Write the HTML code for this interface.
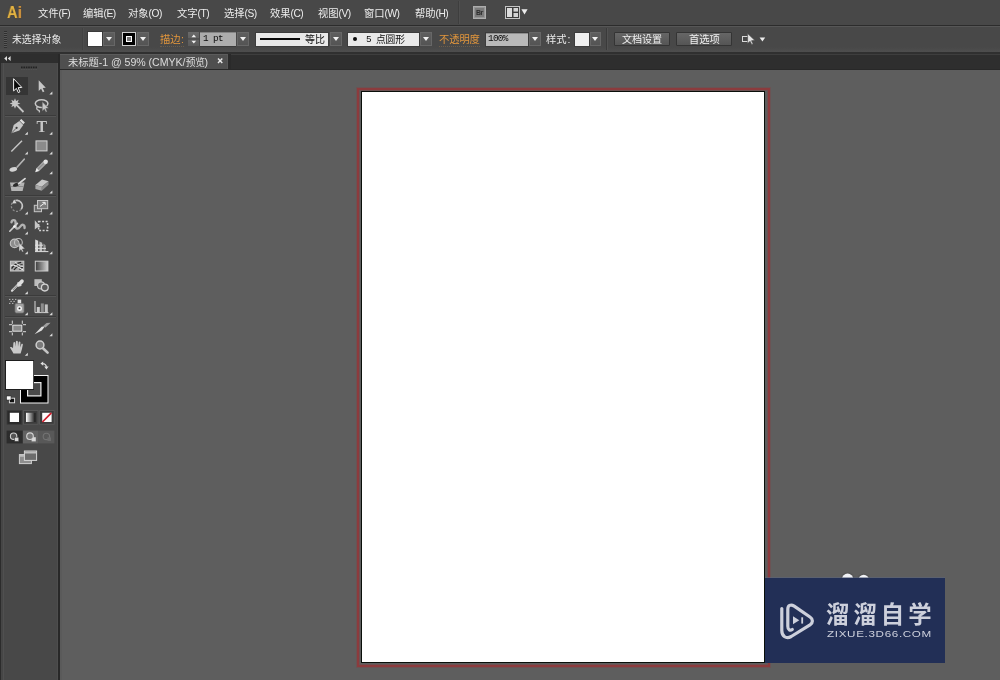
<!DOCTYPE html>
<html lang="zh-CN"><head><meta charset="utf-8"><title>Adobe Illustrator</title>
<style>
html,body{margin:0;padding:0}
body{width:1000px;height:680px;overflow:hidden;position:relative;background:#5e5e5e;
 font-family:"Liberation Sans","Noto Sans CJK SC",sans-serif;font-size:10.5px;color:#e2e2e2}
.a{position:absolute}
.lb{position:absolute;white-space:nowrap;line-height:14px;height:14px;will-change:transform}
.cjt{font-family:"Liberation Sans","Noto Sans CJK SC",sans-serif}
.mono{font-family:"Liberation Mono",monospace}
.dd{position:absolute;width:11.5px;height:14px;box-sizing:border-box;background:linear-gradient(#5e5e5e,#545454);
 border:1px solid #676767}
.dd:after{content:"";position:absolute;left:1.75px;top:3.5px;border-left:3px solid transparent;border-right:3px solid transparent;border-top:4.5px solid #f0f0f0}
.btn{position:absolute;height:14px;box-sizing:border-box;border:1px solid #343434;background:linear-gradient(#666,#555);border-radius:1px}
.fly{fill:#dcdcdc}
</style></head>
<body>
<div class="a" style="left:0px;top:0px;width:1000px;height:25px;background:#484848;"></div>
<div class="a" style="left:0px;top:25px;width:1000px;height:1px;background:#2c2c2c;"></div>
<div class="a" style="left:0px;top:26px;width:1000px;height:1px;background:#565656;"></div>
<div class="a" style="left:0px;top:27px;width:1000px;height:25px;background:linear-gradient(#484848 0,#484848 80%,#4e4e4e 100%);"></div>
<div class="a" style="left:0px;top:52px;width:1000px;height:2px;background:#303030;"></div>
<div class="a" style="left:0px;top:54px;width:1000px;height:1px;background:#3e3e3e;"></div>
<div class="a" style="left:0px;top:55px;width:1000px;height:14px;background:#2e2e2e;"></div>
<div class="a" style="left:60px;top:69px;width:940px;height:1px;background:#282828;"></div>
<div class="a" style="left:60px;top:54px;width:168px;height:15px;background:#4f4f4f;border-top:1px solid #5c5c5c;box-sizing:border-box;border-right:1px solid #585858"></div>
<div class="a" style="left:228px;top:54px;width:3px;height:15px;background:#2a2a2a;"></div>
<div class="a" style="left:60px;top:70px;width:2px;height:610px;background:#5a5a5a;"></div>
<div class="a" style="left:0px;top:54px;width:58px;height:626px;background:#484848;"></div>
<div class="a" style="left:0px;top:54px;width:58px;height:9px;background:#2e2e2e;"></div>
<div class="a" style="left:0px;top:54px;width:1px;height:626px;background:#2c2c2c;"></div>
<div class="a" style="left:1px;top:63px;width:2px;height:617px;background:#464646;"></div>
<div class="a" style="left:3px;top:63px;width:1px;height:617px;background:#505050;"></div>
<div class="a" style="left:57px;top:63px;width:1px;height:617px;background:#4e4e4e;"></div>
<div class="a" style="left:58px;top:54px;width:2px;height:626px;background:#282828;"></div>
<div class="a" style="left:357px;top:88px;width:413px;height:579px;background:transparent;box-sizing:border-box;border:2px solid #8c3b3d;box-shadow:0 0 0 1px rgba(140,59,61,.28),inset 0 0 0 1px rgba(140,59,61,.33)"></div>
<div class="a" style="left:361px;top:91px;width:404px;height:572px;background:#ffffff;box-sizing:border-box;border:1px solid #0a0f0a"></div>
<div class="a" style="left:765px;top:578px;width:180px;height:85px;background:#222f56;"></div>
<div class="a" style="left:7.300px;top:1.800px;height:20px;line-height:20px;font-weight:bold;font-size:16.600px;color:#e4b443;transform:scaleX(.880);transform-origin:0 0;letter-spacing:-.200px;will-change:transform;text-shadow:0 0 1.500px rgba(110,70,0,.700)">A<span style="color:#dc9c42;margin-left:.500px;font-size:17.200px">i</span></div>
<div class="lb" style="left:37.6px;top:6px;color:#ececec;"><span class="cjt" style="font-size:10.3px">文件</span><span style="font-size:10.2px;letter-spacing:-.5px">(F)</span></div>
<div class="lb" style="left:83.1px;top:6px;color:#ececec;"><span class="cjt" style="font-size:10.3px">编辑</span><span style="font-size:10.2px;letter-spacing:-.5px">(E)</span></div>
<div class="lb" style="left:128.1px;top:6px;color:#ececec;"><span class="cjt" style="font-size:10.3px">对象</span><span style="font-size:10.2px;letter-spacing:-.5px">(O)</span></div>
<div class="lb" style="left:176.6px;top:6px;color:#ececec;"><span class="cjt" style="font-size:10.3px">文字</span><span style="font-size:10.2px;letter-spacing:-.5px">(T)</span></div>
<div class="lb" style="left:223.6px;top:6px;color:#ececec;"><span class="cjt" style="font-size:10.3px">选择</span><span style="font-size:10.2px;letter-spacing:-.5px">(S)</span></div>
<div class="lb" style="left:269.6px;top:6px;color:#ececec;"><span class="cjt" style="font-size:10.3px">效果</span><span style="font-size:10.2px;letter-spacing:-.5px">(C)</span></div>
<div class="lb" style="left:317.6px;top:6px;color:#ececec;"><span class="cjt" style="font-size:10.3px">视图</span><span style="font-size:10.2px;letter-spacing:-.5px">(V)</span></div>
<div class="lb" style="left:364.1px;top:6px;color:#ececec;"><span class="cjt" style="font-size:10.3px">窗口</span><span style="font-size:10.2px;letter-spacing:-.5px">(W)</span></div>
<div class="lb" style="left:414.6px;top:6px;color:#ececec;"><span class="cjt" style="font-size:10.3px">帮助</span><span style="font-size:10.2px;letter-spacing:-.5px">(H)</span></div>
<div class="a" style="left:458px;top:1px;width:1px;height:23px;background:#3e3e3e;"></div>
<div class="a" style="left:459px;top:1px;width:1px;height:23px;background:#4f4f4f;"></div>
<div class="a" style="left:473px;top:6px;width:13px;height:13px;box-sizing:border-box;border:1px solid #adadad;background:#7a7a7a;box-shadow:inset 0 0 0 1px #959595"></div>
<div class="a" style="left:475.5px;top:7.5px;font-size:8px;line-height:10px;font-weight:bold;color:#2c2c2c;letter-spacing:-.5px;transform:scaleX(.85);transform-origin:0 0;will-change:transform">Br</div>
<svg class="a" style="left:504px;top:5px" width="26" height="16" viewBox="504 5 26 16"><rect x="505.5" y="6.5" width="14" height="12" fill="#3c3c3c" stroke="#c4c4c4"/><rect x="507" y="8" width="5" height="9" fill="#dcdcdc"/><rect x="513.5" y="8" width="4.5" height="3.6" fill="#d4d4d4"/><rect x="513.5" y="13" width="4.5" height="4" fill="#d4d4d4"/><path d="M521.400 9.300h6.200l-3.100 5.100z" fill="#ececec"/></svg>
<div class="a" style="left:4px;top:31px;width:3px;height:17px;background:repeating-linear-gradient(#2f2f2f 0,#2f2f2f 1px,#585858 1px,#585858 2px)"></div>
<div class="lb" style="left:11.6px;top:31.6px;color:#ececec;"><span class="cjt" style="font-size:9.85px">未选择对象</span></div>
<div class="a" style="left:82px;top:28px;width:1px;height:22px;background:#424242;"></div>
<div class="a" style="left:83px;top:28px;width:1px;height:22px;background:#4d4d4d;"></div>
<div class="a" style="left:88px;top:32px;width:14px;height:14px;background:#ffffff;box-shadow:0 0 0 1px #3a3a3a"></div>
<div class="dd" style="left:103px;top:32px"></div>
<div class="a" style="left:121.5px;top:32px;width:14px;height:14px;box-sizing:border-box;border:1px solid #cfcfcf;background:#000"></div>
<div class="a" style="left:125.5px;top:36px;width:6px;height:6px;box-sizing:border-box;border:1.5px solid #fff;background:#777"></div>
<div class="dd" style="left:137px;top:32px"></div>
<div class="lb" style="left:160px;top:31.8px;color:#e2963c;border-bottom:1px dotted rgba(150,120,80,.45);height:14px"><span class="cjt" style="font-size:10.3px">描边</span><span style="margin-left:.5px">:</span></div>
<div class="a" style="left:187.500px;top:32px;width:11.500px;height:14px;background:linear-gradient(#6a6a6a,#606060 46%,#3c3c3c 47%,#3c3c3c 53%,#626262 54%,#5a5a5a)"></div>
<svg class="a" style="left:187.500px;top:32px" width="12" height="14" viewBox="0 0 12 14"><path d="M5.800 2.400l2.300 2.800H3.500z M5.800 11.600l2.300-2.800H3.500z" fill="#f2f2f2"/></svg>
<div class="a" style="left:200px;top:32px;width:36px;height:14px;background:#adadad;box-shadow:inset 0 1px 0 #858585,0 1px 0 #3a3a3a"></div>
<div class="lb" style="left:202.5px;top:30.1px;"><span class="mono" style="font-size:9.400px;letter-spacing:-.640px;color:#0c0c0c">1 pt</span></div>
<div class="dd" style="left:237px;top:32px"></div>
<div class="a" style="left:256px;top:32.5px;width:72px;height:13.5px;background:#e9e9e9;box-shadow:0 0 0 1px #3c3c3c"></div>
<div class="a" style="left:260px;top:38.3px;width:40px;height:1.7px;background:#0a0a0a;"></div>
<div class="lb" style="left:304.6px;top:31.8px;color:#111;"><span class="cjt" style="font-size:10px">等比</span></div>
<div class="dd" style="left:330px;top:32px"></div>
<div class="a" style="left:348px;top:32.5px;width:70.5px;height:13.5px;background:#e9e9e9;box-shadow:0 0 0 1px #3c3c3c"></div>
<div class="a" style="left:353px;top:37px;width:4.4px;height:4.4px;border-radius:50%;background:#0a0a0a"></div>
<div class="lb" style="left:365.5px;top:30.9px;"><span class="mono" style="font-size:9.400px;color:#0c0c0c">5</span></div>
<div class="lb" style="left:375.8px;top:31.8px;color:#111;"><span class="cjt" style="font-size:9.8px;letter-spacing:-.2px">点圆形</span></div>
<div class="dd" style="left:420px;top:32px"></div>
<div class="lb" style="left:439px;top:31.8px;color:#e2963c;border-bottom:1px dotted rgba(150,120,80,.45);height:14px"><span class="cjt" style="font-size:10.3px;letter-spacing:-.1px">不透明度</span></div>
<div class="a" style="left:486px;top:32.5px;width:41.5px;height:13.5px;background:#b9b9b9;box-shadow:inset 0 1px 0 #8e8e8e,0 0 0 1px #3c3c3c"></div>
<div class="lb" style="left:488.2px;top:29.9px;"><span class="mono" style="font-size:9.400px;letter-spacing:-.700px;color:#0c0c0c">100%</span></div>
<div class="dd" style="left:529px;top:32px"></div>
<div class="lb" style="left:546px;top:31.8px;color:#ececec;"><span class="cjt" style="font-size:10.3px">样式</span><span style="margin-left:1px">:</span></div>
<div class="a" style="left:575px;top:33px;width:13.5px;height:13px;background:#efefef;box-shadow:0 0 0 1px #3c3c3c"></div>
<div class="dd" style="left:589.5px;top:32px"></div>
<div class="a" style="left:606px;top:28px;width:1px;height:22px;background:#3a3a3a;"></div>
<div class="a" style="left:607px;top:28px;width:1px;height:22px;background:#525252;"></div>
<div class="btn" style="left:613.5px;top:32px;width:56px"></div>
<div class="lb" style="left:621.8px;top:32px;color:#f0f0f0;"><span class="cjt" style="font-size:10.1px;letter-spacing:-.1px">文档设置</span></div>
<div class="btn" style="left:675.5px;top:32px;width:56px"></div>
<div class="lb" style="left:688.8px;top:32px;color:#f0f0f0;"><span class="cjt" style="font-size:10.3px">首选项</span></div>
<svg class="a" style="left:740px;top:31px" width="28" height="16" viewBox="740 31 28 16"><rect x="742.5" y="36.5" width="6" height="5" fill="none" stroke="#d8d8d8"/><path d="M747.6 33.5v10l2.5-2.2 1.6 3.3 1.4-.7-1.6-3.2 3.2-.4z" fill="#e4e4e4" stroke="#4a4a4a" stroke-width=".6"/><path d="M759.6 37.6h5.6l-2.8 3.8z" fill="#ececec"/></svg>
<div class="lb" style="left:67.8px;top:55.2px;color:#dcdcdc;"><span class="cjt" style="font-size:10.3px;letter-spacing:-.05px">未标题</span><span style="font-size:10.6px;letter-spacing:-.04px">-1 @ 59% (CMYK/</span><span style="margin-left:.4px"></span><span class="cjt" style="font-size:9.7px;letter-spacing:-.3px">预览</span><span style="font-size:10.6px">)</span></div>
<svg class="a" style="left:216px;top:56px" width="9" height="10" viewBox="0 0 9 10"><path d="M2 2.6l4.3 4.3M6.3 2.6l-4.3 4.3" stroke="#e6e6e6" stroke-width="1.45"/></svg>
<svg class="a" style="left:3px;top:55px" width="10" height="7" viewBox="0 0 10 7"><path d="M4 1L1.2 3.5 4 6zM7.6 1L4.8 3.5 7.6 6z" fill="#dedede"/></svg>
<svg class="a" style="left:0;top:0" width="60" height="480" viewBox="0 0 60 480"><path d="M21 67.5h16" stroke="#222" stroke-width="2" stroke-dasharray="1.6 .8"/><path d="M21 69.2h16" stroke="#5a5a5a" stroke-width=".8" stroke-dasharray="1.6 .8"/><rect x="6" y="77" width="22" height="18" fill="#353535"/><path d="M13.600 78.700v12.200l2.800-2.500 1.900 4.200 1.600-.800-1.800-4.100 3.700-.300z" fill="#0a0a0a" stroke="#f2f2f2" stroke-width="1" stroke-linejoin="miter"/><path d="M38.700 80.300v10.600l2.400-2.200 1.700 3.500 1.600-.700-1.700-3.500 3.100-.300z" fill="#c6c6c6"/><path class="fly" d="M52.4 94.6v-3l-3 3z"/><path d="M15 98.2l1.1 2.7 2.6-1.2-1.1 2.7 2.8 1-2.8 1.1 1.1 2.6-2.6-1.1-1.1 2.7-1.1-2.7-2.6 1.1 1.1-2.6-2.8-1.1 2.8-1-1.1-2.7 2.6 1.2z" fill="#c6c6c6"/><path d="M17.3 105.6l6.2 6.4" stroke="#c6c6c6" stroke-width="1.8"/><ellipse cx="41.6" cy="103.6" rx="6.3" ry="3.9" fill="none" stroke="#c6c6c6" stroke-width="1.5"/><path d="M37.6 106.5c-1.4 1.2-1 3.2.6 3.6s1.6 1.6.6 2.2" fill="none" stroke="#c6c6c6" stroke-width="1.3"/><path d="M42.2 101.6v9.6l2.2-2 1.4 3 1.4-.6-1.4-3 2.9-.3z" fill="#c6c6c6" stroke="#484848" stroke-width=".5"/><rect x="5" y="115" width="51" height="1" fill="#3b3b3b"/><rect x="5" y="116" width="51" height="1" fill="#555"/><path d="M11.4 133.2l2.3-8.2 5.6-4 4 4-4 5.6z" fill="#c6c6c6"/><path d="M19.600 120.600l1.700-1.600 3.600 3.600-1.600 1.700z" fill="#dcdcdc"/><circle cx="16.6" cy="127.8" r="1.1" fill="#3a3a3a"/><path d="M11.6 133l4.4-4.6" stroke="#3a3a3a" stroke-width=".7"/><path class="fly" d="M27.8 134.8v-3l-3 3z"/><text x="36.600" y="131.900" font-family="Liberation Serif,serif" font-size="15.800" font-weight="bold" fill="#c6c6c6">T</text><path class="fly" d="M52.4 134.8v-3l-3 3z"/><path d="M11.3 151.6l10.7-10.8" stroke="#c6c6c6" stroke-width="1.4"/><path class="fly" d="M27.8 154.6v-3l-3 3z"/><rect x="36" y="140.9" width="11" height="10" fill="#8b8b8b" stroke="#d4d4d4" stroke-width="1"/><path class="fly" d="M52.4 154.6v-3l-3 3z"/><path d="M24.200 159.200l-7 7.800" stroke="#b4b4b4" stroke-width="1.700" stroke-linecap="round"/><ellipse cx="13.300" cy="169.400" rx="3.900" ry="2.100" fill="#d2d2d2" transform="rotate(-14 13.300 169.400)"/><path d="M9.300 170.600l3-1.600v2z" fill="#d2d2d2"/><path d="M45.400 162l-7.600 7.600" stroke="#a9a9a9" stroke-width="4" stroke-linecap="butt"/><path d="M43.800 163.400l-6 6" stroke="#8c8c8c" stroke-width="1.200"/><circle cx="45.700" cy="161.700" r="2.200" fill="#e2e2e2"/><path d="M35.200 172.200l1.300-4.100 2.800 2.800z" fill="#ededed"/><path class="fly" d="M52.4 174.2v-3l-3 3z"/><path d="M10 182.6h14.6l-2 8.4H11.4z" fill="#b4b4b4"/><path d="M11 186.5h13" stroke="#8c8c8c" stroke-width="1"/><ellipse cx="16.4" cy="184.6" rx="3.6" ry="1.7" fill="#2c2c2c" transform="rotate(-22 16.4 184.6)"/><path d="M25 178.6l-6.4 5.2" stroke="#d8d8d8" stroke-width="1.8" stroke-linecap="round"/><path d="M35.4 185l6.6-5.6 6.5 1.8-6.7 5.6z" fill="#c6c6c6"/><path d="M35.4 185l6.4 1.8v3.9l-6.4-1.7z" fill="#a8a8a8"/><path d="M41.8 186.8l6.7-5.6v3.6l-6.7 5.9z" fill="#8a8a8a"/><path class="fly" d="M52.4 193.6v-3l-3 3z"/><rect x="5" y="195" width="51" height="1" fill="#3b3b3b"/><rect x="5" y="196" width="51" height="1" fill="#555"/><circle cx="16.800" cy="205.900" r="5.500" fill="none" stroke="#8e8e8e" stroke-width="1.300" stroke-dasharray="2 1.600"/><path d="M15.400 200.600a5.500 5.500 0 0 1 5.800 8.600" fill="none" stroke="#c4c4c4" stroke-width="1.600"/><path d="M12.200 203.400l2-3.800 2.400 3.600z" fill="#d6d6d6"/><path class="fly" d="M27.8 214.6v-3l-3 3z"/><rect x="34.3" y="205.3" width="7.2" height="6.4" fill="#6a6a6a" stroke="#c6c6c6" stroke-width="1"/><rect x="37.5" y="200.5" width="10.2" height="8.2" fill="#7d7d7d" stroke="#c6c6c6" stroke-width="1"/><path d="M40 206.4l5-3.6m-2.6-.4h2.8v2.6" stroke="#efefef" stroke-width="1" fill="none"/><path class="fly" d="M52.4 214.6v-3l-3 3z"/><path d="M11.500 222.200C12 219.500 15.400 219.300 15.600 222.400C15.800 225 14.600 227.700 17 228.600C19.400 229.400 20.600 224.700 22.600 224.700C24 224.700 24.700 226.200 24.600 228" fill="none" stroke="#b2b2b2" stroke-width="2.400" stroke-linecap="round"/><path d="M9.800 231.200l7.600-7.800" stroke="#cfcfcf" stroke-width="1.600" stroke-linecap="round"/><circle cx="14.400" cy="226.500" r="1.300" fill="#f4f4f4"/><path class="fly" d="M27.8 234.400v-3l-3 3z"/><rect x="38.6" y="221.600" width="9" height="9" fill="none" stroke="#d2d2d2" stroke-width="1.5" stroke-dasharray="2 1.5"/><path d="M34.800 220.200v9.200l2.400-1.800 3.400-.5z" fill="#c6c6c6"/><circle cx="14.600" cy="243.400" r="4.300" fill="#8c8c8c" stroke="#c0c0c0" stroke-width="1.200"/><circle cx="18.400" cy="242.400" r="3.900" fill="none" stroke="#c0c0c0" stroke-width="1.100"/><path d="M19 242.600v8.800l2-1.800 1.200 2.400 1.300-.6-1.200-2.400 2.600-.3z" fill="#d6d6d6" stroke="#484848" stroke-width=".4"/><path class="fly" d="M27.800 254.200v-3l-3 3z"/><path d="M35 239.400v12.400h13z" fill="none"/><path d="M35.200 239.600l3 1.200v10.600h-3z" fill="#d8d8d8"/><path d="M39.400 241.400l2.800 1.400v8.600h-2.800z" fill="#bcbcbc"/><path d="M43.400 243.600l2.200 1.600v6.200h-2.200z" fill="#9a9a9a"/><path d="M35 245.200h8M35 248.400h11M35 251.600h13.400" stroke="#dedede" stroke-width="1"/><path class="fly" d="M52.400 254.200v-3l-3 3z"/><rect x="10.400" y="261.200" width="13.400" height="9.800" fill="#a6a6a6" stroke="#c9c9c9" stroke-width="1"/><path d="M11.600 268.600c2.200-3.600 5-5.400 9.600-6.200M14 270c2-3 4.600-4.600 8.600-5.400M19.600 269.800c.800-1.400 1.800-2.200 3.200-2.600" fill="none" stroke="#262626" stroke-width="1.300"/><path d="M11 265.400c3.400-1 7 1.600 12.200 4.600M15.400 262c1.600 2.400 4 3.800 7.800 4.400" fill="none" stroke="#f2f2f2" stroke-width="1"/><linearGradient id="tg" x1="0" x2="1" y1="0" y2="0"><stop offset="0" stop-color="#3c3c3c"/><stop offset="1" stop-color="#d2d2d2"/></linearGradient><rect x="35.300" y="261.200" width="12.600" height="9.800" fill="url(#tg)" stroke="#cfcfcf" stroke-width="1"/><path d="M12 290.800l6.600-6.800" stroke="#d8d8d8" stroke-width="2.200" stroke-linecap="round"/><path d="M12.800 290l5-5.200" stroke="#5a5a5a" stroke-width=".700"/><path d="M17.600 282.400l3.600 3.600" stroke="#c6c6c6" stroke-width="1.500"/><path d="M18.800 284.800l3.200-3.600" stroke="#dedede" stroke-width="3.600" stroke-linecap="round"/><path class="fly" d="M27.800 294.200v-3l-3 3z"/><rect x="34.400" y="279.200" width="7.400" height="6.800" fill="#bdbdbd"/><circle cx="41" cy="285.400" r="3.500" fill="#6b6b6b" stroke="#c6c6c6" stroke-width="1.200"/><circle cx="44.800" cy="287.600" r="3.400" fill="#5a5a5a" stroke="#d2d2d2" stroke-width="1.300"/><rect x="5" y="295" width="51" height="1" fill="#3b3b3b"/><rect x="5" y="296" width="51" height="1" fill="#555"/><rect x="15" y="303.400" width="9" height="9.600" rx="1.400" fill="#a2a2a2" stroke="#6c6c6c" stroke-width=".8"/><rect x="17.600" y="299.600" width="3.600" height="3.600" fill="#e2e2e2"/><circle cx="19.500" cy="308.400" r="2.500" fill="#f2f2f2"/><circle cx="19.500" cy="308.400" r=".95" fill="#2e2e2e"/><path d="M9 299.400h1.400m1.600 0h1.400m1.600 0h1.400M10.400 301.400h1.400m1.600 0h1.400M9 303.400h1.400m1.600 0h1.400" stroke="#bdbdbd" stroke-width="1"/><path class="fly" d="M27.800 315.200v-3l-3 3z"/><path d="M35 301v11.600h13.400" fill="none" stroke="#d6d6d6" stroke-width="1"/><rect x="36.800" y="307" width="3" height="5.200" fill="#cacaca"/><rect x="40.800" y="303.400" width="3" height="8.800" fill="#8e8e8e"/><rect x="44.800" y="304.400" width="3" height="7.800" fill="#c2c2c2"/><path class="fly" d="M52.400 315.200v-3l-3 3z"/><rect x="5" y="316" width="51" height="1" fill="#3b3b3b"/><rect x="5" y="317" width="51" height="1" fill="#555"/><rect x="12.800" y="325.200" width="9" height="6" fill="#8a8a8a" stroke="#e0e0e0" stroke-width="1"/><path d="M9 324.700h3M23 324.700h3M9 331.700h3M23 331.700h3M12.300 320.600v3.200M22.300 320.600v3.200M12.300 332.600v2.800M22.300 332.600v2.800" stroke="#dadada" stroke-width="1"/><path d="M34.600 334.200l7-7.400 3.400-.6-3.200 4.200z" fill="#e0e0e0"/><path d="M42.600 326.400l4-3.400 4-.2-5 4.600z" fill="#a0a0a0"/><path class="fly" d="M52.400 336.200v-3l-3 3z"/><path d="M13.400 353.400c-.8-2-2.400-4-3.400-6 .8-.9 1.900-.5 3 .9l.4-5.500c.3-1 1.600-1 1.800 0l.4 4 .3-5.400c.3-1 1.700-1 1.900 0l.2 5.300.7-4.600c.4-.9 1.600-.7 1.700.2l-.2 5.100 1.200-3.300c.5-.8 1.600-.4 1.500.5-.5 2.900-1.200 5.900-2.300 8.800z" fill="#c9c9c9"/><path class="fly" d="M27.800 355.800v-3l-3 3z"/><circle cx="40" cy="345" r="3.900" fill="#7a7a7a" stroke="#cfcfcf" stroke-width="1.500"/><path d="M43 348.200l4.600 4.400" stroke="#c4c4c4" stroke-width="2.600" stroke-linecap="round"/><rect x="5.500" y="360.500" width="28" height="29" fill="#242424"/><rect x="20" y="375" width="28.500" height="28.500" fill="#f4f4f4"/><rect x="21" y="376" width="26.500" height="26.500" fill="#000"/><rect x="27" y="382" width="14.500" height="14.500" fill="#f0f0f0"/><rect x="28.200" y="383.200" width="12.100" height="12.100" fill="#4a4a4a"/><rect x="5" y="360" width="29" height="30" fill="#1e1e1e"/><rect x="6" y="361" width="27.200" height="28" fill="#fff"/><path d="M42.400 363.600c2.800 0 4 1.200 4 4" fill="none" stroke="#d6d6d6" stroke-width="1.200"/><path d="M40.400 363.600l2.800-2.200v4.400zM46.400 369.400l-2.200-2.800h4.400z" fill="#e0e0e0"/><rect x="9.400" y="398.200" width="5.200" height="4.600" fill="#111" stroke="#e6e6e6" stroke-width=".9"/><rect x="6.600" y="396" width="4.400" height="4" fill="#fafafa" stroke="#222" stroke-width=".5"/><rect x="7" y="410.600" width="14.800" height="13.600" fill="#2a2a2a" stroke="#3a3a3a" stroke-width=".8"/><rect x="23.400" y="410.600" width="14.600" height="13.600" fill="#3c3c3c" stroke="#5c5c5c" stroke-width=".8"/><rect x="39.600" y="410.600" width="14.600" height="13.600" fill="#3c3c3c" stroke="#5c5c5c" stroke-width=".8"/><rect x="9.800" y="412.800" width="9.200" height="9.200" fill="#fdfdfd"/><linearGradient id="tg2" x1="0" x2="1" y1="0" y2="0"><stop offset="0" stop-color="#fff"/><stop offset="1" stop-color="#111"/></linearGradient><rect x="26" y="412.800" width="9.400" height="9.200" fill="url(#tg2)"/><rect x="42.200" y="412.800" width="9.400" height="9.200" fill="#fdfdfd"/><path d="M42.400 422l9-9.200" stroke="#cf1d2c" stroke-width="1.700"/><rect x="6.600" y="430.600" width="16" height="12.800" fill="#2c2c2c"/><rect x="23" y="430.600" width="15.600" height="12.800" fill="#626262"/><rect x="39" y="430.600" width="15.400" height="12.800" fill="#585858"/><circle cx="13.600" cy="436.200" r="3.200" fill="#555" stroke="#cfcfcf" stroke-width="1.100"/><rect x="14.600" y="437.200" width="4.200" height="4.200" fill="#d8d8d8" stroke="#333" stroke-width=".5"/><rect x="31.600" y="437.200" width="4.200" height="4.200" fill="#d8d8d8"/><circle cx="30" cy="436.200" r="3.300" fill="#777" stroke="#d4d4d4" stroke-width="1.100"/><circle cx="46.400" cy="436.400" r="3.200" fill="none" stroke="#737373" stroke-width="1.100"/><rect x="47.400" y="437.400" width="3.600" height="3.600" fill="#6c6c6c"/><rect x="19.400" y="454.600" width="12" height="9" fill="#8e8e8e" stroke="#d0d0d0" stroke-width="1"/><rect x="24.400" y="451" width="12.200" height="9.400" fill="#6c6c6c" stroke="#d6d6d6" stroke-width="1"/><rect x="24.900" y="451.500" width="11.200" height="2" fill="#bdbdbd"/><rect x="19.900" y="455.100" width="4" height="1.600" fill="#c4c4c4"/></svg>
<div class="a" style="left:836px;top:566px;width:44px;height:12px;overflow:hidden"><svg width="44" height="24" viewBox="836 566 44 24"><circle cx="847.6" cy="579.2" r="7" fill="#505050" opacity=".55"/><circle cx="863.7" cy="580" r="6.6" fill="#505050" opacity=".55"/><circle cx="847.6" cy="579.2" r="5.6" fill="#f1f2f6"/><circle cx="863.7" cy="580" r="5.2" fill="#f1f2f6"/></svg></div>
<div class="a" style="left:765px;top:577px;width:180px;height:1px;background:rgba(90,100,125,.55);"></div>
<svg class="a" style="left:775px;top:598px" width="46" height="46" viewBox="775 598 46 46"><path d="M781.8 608.600V630.500C781.800 636.300 786.200 639.400 791.200 636.500L810 624.800C813.200 622.700 813.200 619.100 810 617L794.200 606.100C790.600 603.800 787.800 605.500 787.800 609.200V626.300C787.800 629.900 790.200 631 792.300 629.500" fill="none" stroke="#cdd0dc" stroke-width="3.200" stroke-linecap="round" stroke-linejoin="round"/><path d="M793 616.300v7.900l6.300-3.950z" fill="#cdd0dc"/><rect x="801.300" y="617.300" width="1.800" height="6.300" fill="#cdd0dc"/></svg>
<div class="lb" style="left:824.1px;top:602.2px;color:#cdd0dc;height:26px;line-height:26px"><span class="cjt" style="font-size:23.4px;font-weight:bold;letter-spacing:4px;margin-left:2px">溜溜自学</span></div>
<div class="a" style="left:826.600px;top:628.200px;height:12px;line-height:12px;font-size:9.900px;letter-spacing:.550px;color:#cdd0dc;white-space:nowrap;transform:scaleX(1.180);transform-origin:0 0;will-change:transform">ZIXUE.3D66.COM</div>
</body></html>
